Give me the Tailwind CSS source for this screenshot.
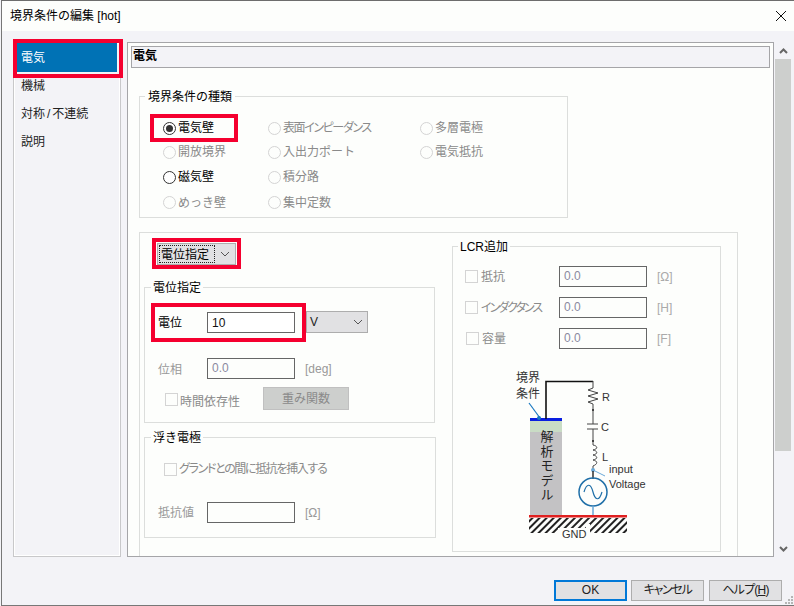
<!DOCTYPE html>
<html lang="ja">
<head>
  <meta charset="UTF-8">
  <title>境界条件の編集 [hot]</title>
  <script src="https://cdn.jsdelivr.net/npm/@tailwindcss/browser@4"></script>
</head>
<body class="w-[794px] h-[606px] overflow-hidden bg-[#f3f3f7] text-[12px] leading-[16px] text-black font-['Liberation_Sans','Noto_Sans_CJK_JP',sans-serif]">
  <div class="relative flex flex-col ml-[1px] w-[793px] h-[606px] border-t border-t-[#6d6d6d] border-b border-b-[#777777] border-l border-l-[#777777]">
    <!-- title bar -->
    <div class="flex items-center justify-between h-[30px] shrink-0 bg-[#fdfefc] pl-[8px] pr-[7px]">
      <span>境界条件の編集 [hot]</span>
      <svg width="12" height="12" viewBox="0 0 12 12"><path d="M1 1L11 11M11 1L1 11" stroke="#111" stroke-width="1"/></svg>
    </div>

    <div class="flex pt-[11px] pl-[11px]">
      <!-- sidebar -->
      <div class="w-[108px] h-[515px] shrink-0 border border-[#c8c8ca] shadow-[inset_0_0_0_1px_#ffffff] px-[3px]">
        <div class="h-[29px] flex items-center pl-[4px] pt-[1px] bg-[#0072b5] text-white">電気</div>
        <div class="h-[28px] -mt-[1px] flex items-center pl-[4px] pt-[2px] text-[#222]">機械</div>
        <div class="h-[28px] flex items-center pl-[4px] pt-[2px] text-[#222]">対称<span class="mx-[2px]">/</span>不連続</div>
        <div class="h-[28px] flex items-center pl-[4px] pt-[2px] text-[#222]">説明</div>
      </div>

      <!-- main panel -->
      <div class="ml-[6px] w-[647px] h-[515px] shrink-0 bg-[#fdfefc] border border-[#a5a5a8] p-[3px] overflow-hidden">
        <div class="h-[22px] bg-[#f3f3f7] border border-[#a5a5a8] font-bold pl-[1px] leading-[19px]">電気</div>

        <!-- boundary type -->
        <div class="relative ml-[8px] mt-[28px] w-[429px] h-[122px] border border-[#dcdedc]">
          <span class="absolute left-[5px] -top-[8px] px-[3px] bg-[#fdfefc]">境界条件の種類</span>
          <div class="grid grid-cols-[105px_152px_1fr] grid-rows-[24px_24px_26px_25px] pl-[23px] pt-[19px]">
            <label class="flex items-center gap-[2px]"><span class="flex items-center justify-center w-[13px] h-[13px] rounded-full border border-[#333] bg-white"><span class="w-[7px] h-[7px] rounded-full bg-[#333]"></span></span>電気壁</label>
            <label class="flex items-center gap-[2px] text-[#8a8a8a]"><span class="w-[13px] h-[13px] rounded-full border border-[#d4d4d4]"></span><span class="[font-feature-settings:'palt'] tracking-[-1.4px]">表面インピーダンス</span></label>
            <label class="flex items-center gap-[2px] text-[#8a8a8a]"><span class="w-[13px] h-[13px] rounded-full border border-[#d4d4d4]"></span>多層電極</label>
            <label class="flex items-center gap-[2px] text-[#8a8a8a]"><span class="w-[13px] h-[13px] rounded-full border border-[#d4d4d4]"></span>開放境界</label>
            <label class="flex items-center gap-[2px] text-[#8a8a8a]"><span class="w-[13px] h-[13px] rounded-full border border-[#d4d4d4]"></span>入出力ポート</label>
            <label class="flex items-center gap-[2px] text-[#8a8a8a]"><span class="w-[13px] h-[13px] rounded-full border border-[#d4d4d4]"></span>電気抵抗</label>
            <label class="flex items-center gap-[2px]"><span class="w-[13px] h-[13px] rounded-full border border-[#333] bg-white"></span>磁気壁</label>
            <label class="flex items-center gap-[2px] text-[#8a8a8a]"><span class="w-[13px] h-[13px] rounded-full border border-[#d4d4d4]"></span>積分路</label>
            <span></span>
            <label class="flex items-center gap-[2px] text-[#8a8a8a]"><span class="w-[13px] h-[13px] rounded-full border border-[#d4d4d4]"></span>めっき壁</label>
            <label class="flex items-center gap-[2px] text-[#8a8a8a]"><span class="w-[13px] h-[13px] rounded-full border border-[#d4d4d4]"></span>集中定数</label>
          </div>
        </div>

        <!-- condition group -->
        <div class="ml-[8px] mt-[14px] w-[599px] h-[340px] border border-[#dcdedc] flex">
          <div class="w-[297px] pl-[4px] shrink-0">
            <div class="ml-[13px] mt-[10px] w-[79px] h-[22px] flex items-center justify-between bg-[#e1e1e3] border border-[#adadad] pr-[5px] pl-[1px]">
              <span class="border border-dotted border-[#222] h-[18px] w-[56px] pl-[1px] leading-[18px]">電位指定</span>
              <svg width="10" height="6" viewBox="0 0 10 6"><path d="M1 1L5 5L9 1" fill="none" stroke="#555"/></svg>
            </div>

            <!-- potential -->
            <div class="relative mt-[22px] w-[291px] h-[136px] border border-[#dcdedc]">
              <span class="absolute left-[6px] -top-[8px] px-[2px] bg-[#fdfefc]">電位指定</span>
              <div class="flex items-center pl-[13px] pt-[23px]">
                <span class="w-[49px] pt-[2px]">電位</span>
                <span class="w-[88px] h-[21px] border border-[#666] bg-white pl-[4px] leading-[21px] text-[#111]">10</span>
                <div class="ml-[11px] w-[62px] h-[22px] flex items-center justify-between bg-[#e1e1e3] border border-[#adadad] pl-[3px] pr-[4px]">
                  <span class="text-[#222]">V</span>
                  <svg width="10" height="6" viewBox="0 0 10 6"><path d="M1 1L5 5L9 1" fill="none" stroke="#555"/></svg>
                </div>
              </div>
              <div class="flex items-center pl-[13px] pt-[25px] text-[#999]">
                <span class="w-[49px] pt-[2px]">位相</span>
                <span class="w-[88px] h-[21px] border border-[#666] pl-[4px] leading-[19px] text-[#8a8aa0]">0.0</span>
                <span class="ml-[10px]">[deg]</span>
              </div>
              <div class="flex items-center pl-[20px] pt-[8px] text-[#8a8a8a]">
                <span class="w-[13px] h-[13px] mt-[2px] border border-[#d4d4d4] mr-[2px]"></span>
                <span class="w-[83px] pt-[6px]">時間依存性</span>
                <span class="w-[86px] h-[23px] bg-[#cdcfcd] border border-[#c0c0c0] text-center leading-[23px]">重み関数</span>
              </div>
            </div>

            <!-- floating electrode -->
            <div class="relative mt-[14px] w-[292px] h-[101px] border border-[#dcdedc]">
              <span class="absolute left-[6px] -top-[8px] px-[2px] bg-[#fdfefc]">浮き電極</span>
              <div class="flex items-center pl-[19px] pt-[23px] text-[#8a8a8a]">
                <span class="w-[13px] h-[13px] border border-[#d4d4d4] mr-[2px]"></span><span class="[font-feature-settings:'palt'] tracking-[-1.35px]">グランドとの間に抵抗を挿入する</span>
              </div>
              <div class="flex items-center pl-[13px] pt-[25px] text-[#999]">
                <span class="w-[49px]">抵抗値</span>
                <span class="w-[88px] h-[21px] border border-[#666]"></span>
                <span class="ml-[10px]">[Ω]</span>
              </div>
            </div>
          </div>

          <!-- LCR -->
          <div class="relative ml-[15px] mt-[13px] w-[269px] h-[306px] border border-[#dcdedc] shrink-0">
            <span class="absolute left-[5px] -top-[8px] px-[2px] bg-[#fdfefc]">LCR追加</span>
            <div class="grid grid-cols-[13px_81px_88px_1fr] gap-y-[10px] items-center pl-[12px] pt-[19px] text-[#8a8a8a]">
              <span class="w-[13px] h-[13px] border border-[#d4d4d4]"></span>
              <span class="pl-[3px]">抵抗</span>
              <span class="h-[21px] border border-[#666] pl-[4px] leading-[19px] text-[#8a8aa0]">0.0</span>
              <span class="pl-[10px] text-[#aaa]">[Ω]</span>
              <span class="w-[13px] h-[13px] border border-[#d4d4d4]"></span>
              <span class="pl-[3px] whitespace-nowrap [font-feature-settings:'palt'] tracking-[-2px]">インダクタンス</span>
              <span class="h-[21px] border border-[#666] pl-[4px] leading-[19px] text-[#8a8aa0]">0.0</span>
              <span class="pl-[10px] text-[#aaa]">[H]</span>
              <span class="w-[13px] h-[13px] ml-[1px] border border-[#d4d4d4]"></span>
              <span class="pl-[4px]">容量</span>
              <span class="h-[21px] border border-[#666] pl-[4px] leading-[19px] text-[#8a8aa0]">0.0</span>
              <span class="pl-[10px] text-[#aaa]">[F]</span>
            </div>

            <!-- circuit diagram -->
            <svg width="160" height="190" viewBox="0 0 160 190" class="absolute left-[37px] top-[114px]" font-family="'Liberation Sans','Noto Sans CJK JP',sans-serif" font-size="12" fill="#333">
              <defs>
                <pattern id="hatch" width="5" height="5" patternUnits="userSpaceOnUse" patternTransform="rotate(45)"><rect width="2" height="5" fill="#222"/></pattern>
              </defs>
              <text x="26" y="21">境界</text>
              <text x="26" y="37">条件</text>
              <rect x="40" y="58" width="32" height="97" fill="#c3c2c4"/>
              <rect x="40" y="60" width="32" height="11" fill="#c9dcc5"/>
              <rect x="40" y="57" width="32" height="3" fill="#0a1ee0"/>
              <path d="M39 42L50 57" stroke="#1a78c0" stroke-width="1.2"/>
              <circle cx="49" cy="57" r="2" fill="#1a78c0"/>
              <path d="M56 58V20.500H103" fill="none" stroke="#111" stroke-width="1.600"/>
              <path d="M103 20V27L98 29L108 32L98 35L108 38L98 41L103 43V63M97 63H108M97 68H108M103 68V84C108 85 108 88 103 89C108 90 108 93 103 94C108 95 108 98 103 99C108 100 108 103 103 105V108" fill="none" stroke="#444" stroke-width="1"/>
              <circle cx="103" cy="49" r="1" fill="#222"/>
              <circle cx="103" cy="80" r="1" fill="#222"/>
              <text x="112" y="40" font-size="11">R</text>
              <text x="111" y="70" font-size="11">C</text>
              <text x="112" y="100" font-size="11">L</text>
              <text x="119" y="112" font-size="11">input</text>
              <text x="119" y="127" font-size="11">Voltage</text>
              <path d="M115 115L103 109" stroke="#6aa9d8"/>
              <circle cx="103" cy="109" r="2" fill="#6aa9d8"/>
              <path d="M103 110V118" stroke="#222" stroke-width="1.400"/>
              <circle cx="103" cy="131" r="14" fill="none" stroke="#1f6fa8" stroke-width="1.500"/>
              <path d="M94 131C97 121 101 123 103 131C105 139 109 141 112 131" fill="none" stroke="#1f6fa8" stroke-width="1.200"/>
              <path d="M103 145V155" stroke="#6aa9d8" stroke-width="1.500"/>
              <rect x="39" y="157" width="98" height="15" fill="url(#hatch)"/>
              <rect x="39" y="154" width="98" height="2.500" fill="#e02020"/>
              <rect x="68" y="167" width="30" height="12" fill="#fdfefc"/>
              <rect x="96" y="163" width="4" height="9" fill="#fdfefc"/>
              <text x="72" y="177" font-size="11">GND</text>
              <text x="56" y="69" font-size="13" writing-mode="vertical-rl" letter-spacing="1.500" fill="#222">解析モデル</text>
            </svg>
          </div>
        </div>
      </div>

      <!-- scrollbar -->
      <div class="ml-[1px] w-[16px] h-[515px] shrink-0 flex flex-col">
        <div class="h-[17px] flex items-center justify-center">
          <svg width="9" height="6" viewBox="0 0 9 6"><path d="M1 5L4.500 1.500L8 5" fill="none" stroke="#666" stroke-width="2"/></svg>
        </div>
        <div class="h-[392px] bg-[#cdcfcd]"></div>
        <div class="flex-1 flex items-end justify-center pb-[5px]">
          <svg width="9" height="6" viewBox="0 0 9 6"><path d="M1 1L4.500 4.500L8 1" fill="none" stroke="#666" stroke-width="2"/></svg>
        </div>
      </div>
    </div>

    <!-- footer -->
    <div class="flex justify-end gap-[5px] pt-[23px] pr-[12px]">
      <button class="w-[73px] h-[21px] -mr-[1px] bg-[#e1e1e3] border-2 border-[#0078d7] leading-[17px] text-[#222]">OK</button>
      <button class="w-[73px] h-[21px] bg-[#e1e1e3] border border-[#adadad] leading-[19px] text-[#222] [font-feature-settings:'palt'] tracking-[-1.3px]">キャンセル</button>
      <button class="w-[73px] h-[21px] bg-[#e1e1e3] border border-[#adadad] leading-[19px] text-[#222] [font-feature-settings:'palt'] tracking-[-0.8px]">ヘルプ(<span class="underline">H</span>)</button>
    </div>

    <!-- resize grip -->
    <svg width="10" height="10" viewBox="0 0 10 10" class="absolute right-0 bottom-0" fill="#b5b5b5">
      <rect x="7" y="1" width="2" height="2"/><rect x="4" y="4" width="2" height="2"/><rect x="7" y="4" width="2" height="2"/><rect x="1" y="7" width="2" height="2"/><rect x="4" y="7" width="2" height="2"/><rect x="7" y="7" width="2" height="2"/>
    </svg>

    <!-- red callouts -->
    <div class="absolute left-[11px] top-[38px] w-[110px] h-[39px] border-[4px] border-[#f5002f]"></div>
    <div class="absolute left-[148px] top-[113px] w-[88px] h-[28px] border-[4px] border-[#f5002f]"></div>
    <div class="absolute left-[150px] top-[237px] w-[89px] h-[31px] border-[4px] border-[#f5002f]"></div>
    <div class="absolute left-[149px] top-[302px] w-[155px] h-[39px] border-[4px] border-[#f5002f]"></div>
  </div>
</body>
</html>
